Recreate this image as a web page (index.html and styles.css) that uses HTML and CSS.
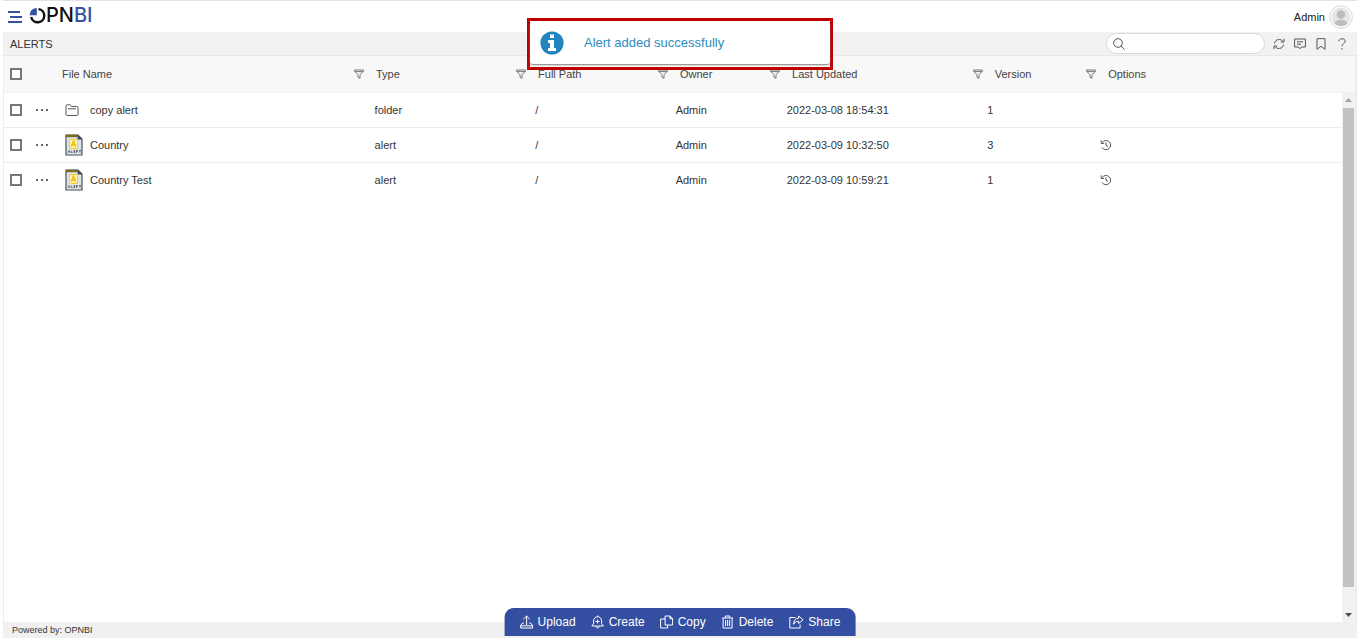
FILE: index.html
```html
<!DOCTYPE html>
<html lang="en">
<head>
<meta charset="utf-8">
<title>OPNBI - Alerts</title>
<link rel="stylesheet" href="styles.css">
</head>
<body>
<svg class="sprite" aria-hidden="true">
  <symbol id="filter" viewBox="0 0 10 10"><path d="M.6 1h8.800v1.200L6 5.800V9.300L4 8.300V5.800L.6 2.200zM1 2.600h8"/></symbol>
  <symbol id="alert" viewBox="0 0 18 22">
    <path d="M1 1h12l4 4v16H1z" fill="#dfe3e8" stroke="#4a525c" stroke-width="1.2"/>
    <path d="M1 .8h11.500v2.400H1z" fill="#7a6a1c"/>
    <path d="M12.500 .5l5 5h-5z" fill="#3e4a5a"/>
    <path d="M4.500 5.500h8v9h-8z" fill="#fff3b0" stroke="#f5cf2e"/>
    <path d="M6.300 12.500 8.500 7l2.200 5.500M7 11h3" fill="none" stroke="#eebc00" stroke-width="1.300"/>
    <path d="M3 18.800l1-2.300 1 2.300M6.300 16.500v2h1.400M10.300 16.500H9v2h1.300M9 17.500h1M11.500 18.800v-2.300h1v1h-1M14 16.500h2M15 16.500v2.300" fill="none" stroke="#3e4650" stroke-width=".7"/>
  </symbol>
  <symbol id="history" viewBox="0 0 12 12"><path d="M2 3.800A4.600 4.600 0 1 1 2 8.400M1.200 1.400v3h3M6 3.500v2.800l2 1.200"/></symbol>
</svg>
<div class="page">
  <header class="topbar">
    <button class="menu" aria-label="Menu"><svg width="16" height="14" viewBox="0 0 16 14"><path d="M1 2h12M3 7h12M1 12h14" fill="none" stroke="#3650a2" stroke-width="2"/></svg></button>
    <a class="logo" href="#" aria-label="OPNBI"><svg width="17" height="17" viewBox="0 0 17 17"><path d="M9.500 2.100A6.600 6.600 0 1 1 2.200 10" fill="none" stroke="#111" stroke-width="2.400"/><path d="M7.800 1v7.200H.6A7.200 7.200 0 0 1 7.800 1z" fill="#3650a2"/></svg><span>PN<span class="logo-accent">BI</span></span></a>
    <div class="user">
      <span>Admin</span>
      <svg width="24" height="24" viewBox="0 0 24 24"><circle cx="12" cy="12" r="11.300" fill="#fff" stroke="#d5d5d5"/><circle cx="12" cy="12" r="9.500" fill="#e6e6e6"/><circle cx="12" cy="9.500" r="4.300" fill="#bdbdbd"/><path d="M5.500 18.500c1-5 12-5 13 0a9.500 9.500 0 0 1-13 0z" fill="#bdbdbd"/></svg>
    </div>
  </header>
  <div class="subbar">
    <h1>ALERTS</h1>
    <label class="search"><svg class="line" width="12" height="12" viewBox="0 0 12 12"><circle cx="5" cy="5" r="4.300"/><path d="M8 8l3.500 3.500"/></svg><input type="search" aria-label="Search"></label>
    <div class="tools">
      <button aria-label="Refresh"><svg class="line" width="12" height="12" viewBox="0 0 12 12"><path d="M1.500 5.500C2 1 8 .2 10.300 3.700M11 .8v3.200H7.800M10.500 6.500C10 11 4 11.800 1.700 8.300M1 11.200V8h3.200"/></svg></button>
      <button aria-label="Comments"><svg class="line" width="12" height="12" viewBox="0 0 12 12"><path d="M.6 1h10.800v8H7.500L6 10.800 4.500 9H.6zM3 3.800h6M3 6.200h4"/></svg></button>
      <button aria-label="Bookmark"><svg class="line" width="12" height="12" viewBox="0 0 12 12"><path d="M2 .7h8v10.600L6 8.300l-4 3z"/></svg></button>
      <button aria-label="Help"><svg class="line" width="12" height="12" viewBox="0 0 12 12"><path d="M2.800 3.300C3-.1 9.400 0 9.200 3.300 9.100 5.500 6 5.300 6 8.300M6 10v1.600"/></svg></button>
    </div>
  </div>
  <main class="files">
    <table class="grid grid-head">
      <colgroup><col class="c-check"><col class="c-menu"><col><col class="c-type"><col class="c-path"><col class="c-owner"><col class="c-updated"><col class="c-version"><col class="c-options"></colgroup>
      <thead><tr>
        <th><input type="checkbox" aria-label="Select all"></th>
        <th></th>
        <th>File Name</th>
        <th><div class="head"><button aria-label="Filter file name"><svg class="line"><use href="#filter"/></svg></button>Type</div></th>
        <th><div class="head"><button aria-label="Filter type"><svg class="line"><use href="#filter"/></svg></button>Full Path</div></th>
        <th><div class="head"><button aria-label="Filter path"><svg class="line"><use href="#filter"/></svg></button>Owner</div></th>
        <th><div class="head"><button aria-label="Filter owner"><svg class="line"><use href="#filter"/></svg></button>Last Updated</div></th>
        <th><div class="head"><button aria-label="Filter last updated"><svg class="line"><use href="#filter"/></svg></button>Version</div></th>
        <th><div class="head"><button aria-label="Filter version"><svg class="line"><use href="#filter"/></svg></button>Options</div></th>
      </tr></thead>
    </table>
    <div class="scroller">
      <div class="rows">
        <table class="grid grid-body">
          <colgroup><col class="c-check"><col class="c-menu"><col><col class="c-type"><col class="c-path"><col class="c-owner"><col class="c-updated"><col class="c-version"><col class="c-options"></colgroup>
          <tbody>
            <tr>
              <td><input type="checkbox" aria-label="Select copy alert"></td>
              <td><button class="dots" aria-label="More actions"><svg width="14" height="4" viewBox="0 0 14 4"><circle cx="2" cy="2" r="1"/><circle cx="7" cy="2" r="1"/><circle cx="12" cy="2" r="1"/></svg></button></td>
              <td><div class="file"><svg class="line folder" viewBox="0 0 18 12"><path d="M1 10.500V2.200Q1 .8 2.200.8H5L6.500 2.500h5.300Q13 2.500 13 3.700v6.600q0 1.200-1.200 1.200H2.200Q1 11.500 1 10.500zM3 4.800h8"/></svg><span>copy alert</span></div></td>
              <td>folder</td><td>/</td><td>Admin</td><td>2022-03-08 18:54:31</td><td>1</td><td></td>
            </tr>
            <tr>
              <td><input type="checkbox" aria-label="Select Country"></td>
              <td><button class="dots" aria-label="More actions"><svg width="14" height="4" viewBox="0 0 14 4"><circle cx="2" cy="2" r="1"/><circle cx="7" cy="2" r="1"/><circle cx="12" cy="2" r="1"/></svg></button></td>
              <td><div class="file"><svg class="alert"><use href="#alert"/></svg><span>Country</span></div></td>
              <td>alert</td><td>/</td><td>Admin</td><td>2022-03-09 10:32:50</td><td>3</td><td><button aria-label="History"><svg class="line history"><use href="#history"/></svg></button></td>
            </tr>
            <tr>
              <td><input type="checkbox" aria-label="Select Country Test"></td>
              <td><button class="dots" aria-label="More actions"><svg width="14" height="4" viewBox="0 0 14 4"><circle cx="2" cy="2" r="1"/><circle cx="7" cy="2" r="1"/><circle cx="12" cy="2" r="1"/></svg></button></td>
              <td><div class="file"><svg class="alert"><use href="#alert"/></svg><span>Country Test</span></div></td>
              <td>alert</td><td>/</td><td>Admin</td><td>2022-03-09 10:59:21</td><td>1</td><td><button aria-label="History"><svg class="line history"><use href="#history"/></svg></button></td>
            </tr>
          </tbody>
        </table>
      </div>
      <div class="scrollbar">
        <button aria-label="Scroll up"><svg width="7" height="4" viewBox="0 0 7 4"><path d="M0 4l3.500-4L7 4z" fill="#a3a3a3"/></svg></button>
        <div class="track"><div class="thumb"></div></div>
        <button aria-label="Scroll down"><svg width="7" height="4" viewBox="0 0 7 4"><path d="M0 0l3.500 4L7 0z" fill="#505050"/></svg></button>
      </div>
    </div>
  </main>
  <footer class="footer">Powered by: OPNBI</footer>

  <div class="actions">
    <button><svg width="14" height="14" viewBox="0 0 14 14"><path d="M7 10V1.200M3.800 4.200 7 1l3.200 3.200M4.500 8H3l-2 2.500V13h12v-2.500L11 8H9.500M1 10.800h12"/></svg>Upload</button>
    <button><svg width="14" height="14" viewBox="0 0 14 14"><path d="M1.200 11h11.600L11 8.700V6.200C11 .2 3 .2 3 6.200v2.500zM7 .5v1.200M5.300 11.200c.3 2.400 3.100 2.400 3.400 0M7 4.500v4M5 6.500h4"/></svg>Create</button>
    <button><svg width="14" height="14" viewBox="0 0 14 14"><path d="M5.500 1h5L13 3.500V10H5.500zM10.300 1v2.700H13M5.500 4H1v9h7v-3"/></svg>Copy</button>
    <button><svg width="14" height="14" viewBox="0 0 14 14"><path d="M1.500 3h11M4.800 3V1h4.400v2M2.500 3v10h9V3M5 5v6M7 5v6M9 5v6"/></svg>Delete</button>
    <button><svg width="16" height="14" viewBox="0 0 16 14"><path d="M7 2.500H1.200V13h10.300V9.500M10 1l4.500 3.800L10 8.500V6.300C7.500 6.300 6 7.300 5 9.300 5 6 6.500 3.300 10 3.200z"/></svg>Share</button>
  </div>

  <div class="toast-frame">
    <div class="toast" role="status">
      <svg width="24" height="24" viewBox="0 0 24 24"><circle cx="12" cy="12" r="11.600" fill="#2185bf"/><path d="M10 3.500h4v3.500h-4zM8 9h6v8h2v3H8v-3h2v-5H8z" fill="#fff"/></svg>
      <span>Alert added successfully</span>
    </div>
  </div>
</div>
</body>
</html>
```

FILE: styles.css
```css
* { box-sizing: border-box; }
body { margin: 0; background: #fff; color: #333; font: 11px/14px "Liberation Sans", Arial, sans-serif; }
button { padding: 0; border: 0; background: none; color: inherit; font: inherit; display: flex; align-items: center; cursor: pointer; }
svg { display: block; flex: none; }
.sprite { position: absolute; width: 0; height: 0; }
.line { fill: none; stroke: #555; stroke-width: 1; }
.page { position: relative; display: flex; flex-direction: column; min-height: 100vh; margin: 0 7px 0 3px; padding-bottom: 4px; }

.topbar { display: flex; align-items: center; height: 32px; padding: 0 4px; border-top: 1px solid #e2e2e2; }
.menu { margin-right: 6px; }
.logo { display: flex; align-items: center; align-self: flex-start; height: 28px; color: #111; text-decoration: none; font: 500 20px/28px Inter, sans-serif; }
.logo-accent { color: #3650a2; }
.user { display: flex; align-items: center; gap: 4px; margin-left: auto; color: #222; }

.subbar { display: flex; align-items: center; height: 24px; padding: 0 9px 0 7px; background: #f2f2f2; border-bottom: 1px solid #e8e8e8; }
.subbar h1 { margin: 0 auto 0 0; font-size: 11px; font-weight: 400; }
.search { display: flex; align-items: center; gap: 6px; width: 159px; height: 21px; padding: 0 8px 0 6px; border: 1px solid #d3dae6; border-radius: 11px; background: #fff; }
.search input { flex: 1; min-width: 0; border: 0; outline: 0; background: none; font: inherit; }
.tools { display: flex; gap: 9px; margin-left: 8px; }

.files { display: flex; flex: 1; flex-direction: column; border: solid #ececec; border-width: 0 2px 0 1px; }
.grid { width: 100%; table-layout: fixed; border-collapse: collapse; }
.grid th, .grid td { padding: 0; text-align: left; font-weight: 400; white-space: nowrap; }
.grid-head th { height: 36px; background: #f8f8f8; border-bottom: 1px solid #f0f0f0; color: #444; }
.head { display: flex; align-items: center; gap: 12px; }
.head svg { width: 10px; height: 10px; stroke: #777; }
.grid-body td { height: 35px; }
.grid-body tr + tr td { border-top: 1px solid #ececec; }
.grid-body td:nth-child(n+4) { padding-left: 24px; }
.grid input { display: block; appearance: none; width: 12px; height: 12px; margin: 0 0 0 6px; border: 2px solid #777; background: #fff; }
.c-check { width: 28px; }
.c-menu { width: 30px; }
.c-type { width: 12%; }
.c-path { width: 10.5%; }
.c-owner { width: 8.3%; }
.c-updated { width: 15%; }
.c-version { width: 8.4%; }
.c-options { width: 19.9%; }
.dots { margin-left: 3px; }
.dots svg { fill: #333; }
.file { display: flex; align-items: center; gap: 7px; padding-left: 3px; }
.folder { width: 18px; height: 12px; }
.alert { width: 18px; height: 22px; }
.history { width: 12px; height: 12px; }

.scroller { display: flex; flex: 1; }
.rows { flex: 1; min-width: 0; }
.scrollbar { display: flex; flex-direction: column; width: 13px; background: #f1f1f1; }
.scrollbar button { justify-content: center; height: 15px; }
.track { flex: 1; }
.thumb { height: 96%; margin: 0 1px; background: #c1c1c1; }

.footer { height: 16px; padding-left: 9px; background: #f0f0f0; font-size: 9px; line-height: 16px; }

.actions { position: absolute; bottom: 6px; left: 50%; transform: translateX(-50%); display: flex; align-items: center; gap: 15px; height: 28px; padding: 0 15px; border-radius: 9px 9px 0 0; background: #344fa1; color: #fff; font-size: 12px; }
.actions button { gap: 4px; white-space: nowrap; }
.actions svg { fill: none; stroke: #fff; stroke-width: 1; }

.toast-frame { position: absolute; top: 18px; left: 50%; transform: translateX(-50%); width: 306px; height: 52px; padding: 1px 0 3px; border: 3px solid #c00000; background: #fff; }
.toast { display: flex; align-items: center; gap: 20px; height: 42px; padding-left: 10px; border-radius: 3px; background: #fff; box-shadow: 0 1px 2px #777; color: #2e8bc0; font-size: 13px; }
```
